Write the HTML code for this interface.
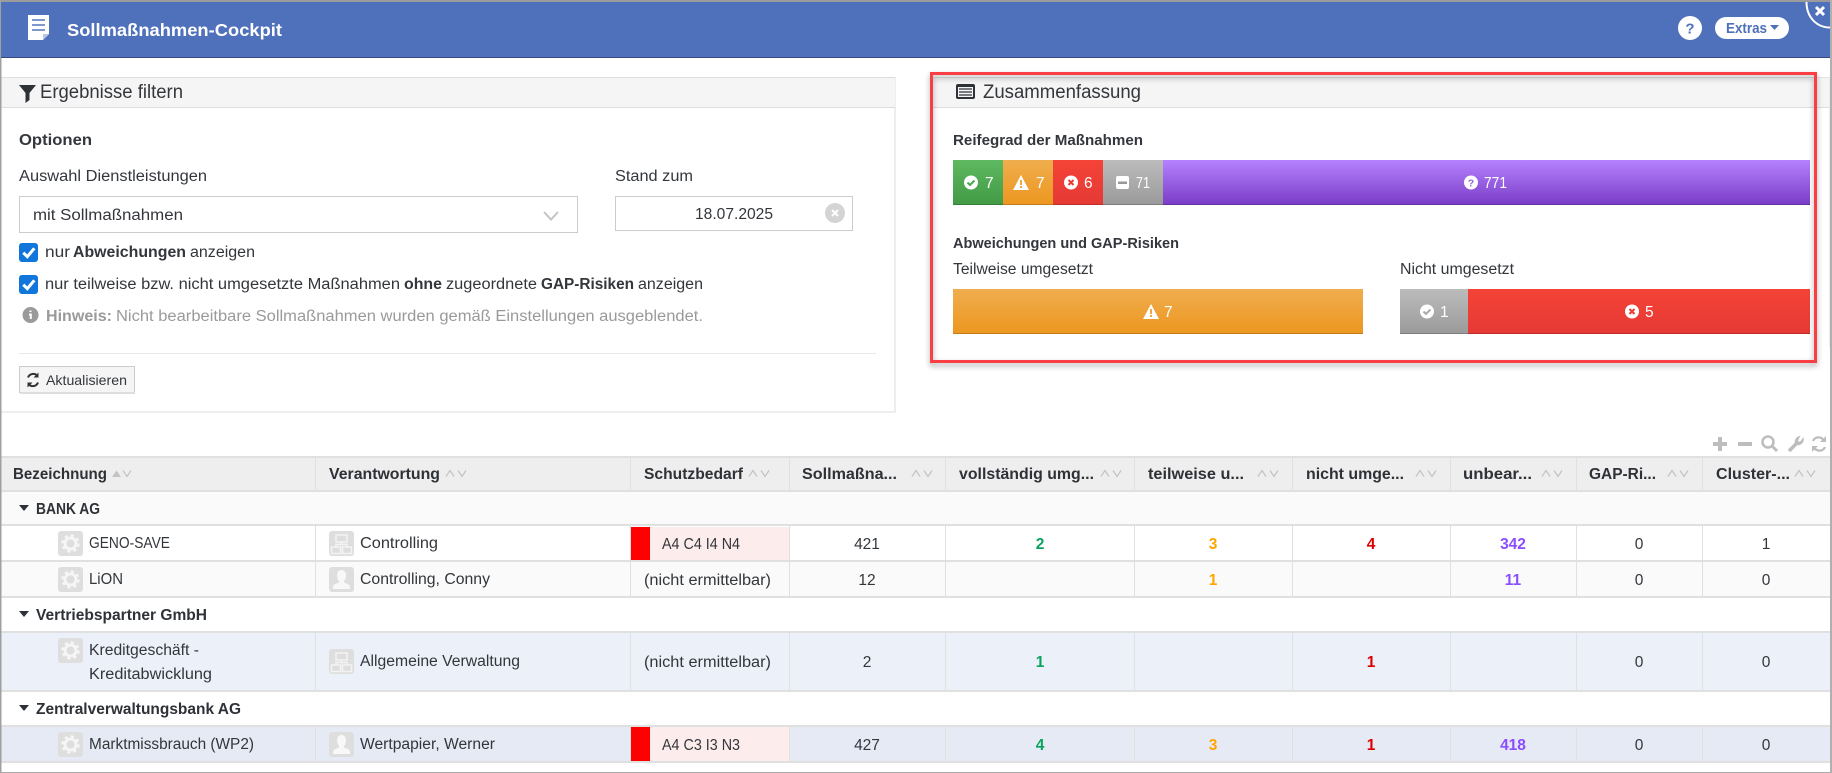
<!DOCTYPE html>
<html lang="de"><head><meta charset="utf-8"><title>Sollmaßnahmen-Cockpit</title>
<style>
html,body{margin:0;padding:0;background:#fff;width:1832px;height:773px;overflow:hidden}
svg{display:block}
text{font-family:"Liberation Sans",sans-serif;font-size:15.5px;fill:#33363b}
.b{font-weight:700}
.h{font-weight:700;fill:#2e3136}
.w{fill:#fff}
.c{text-anchor:middle}
.g{fill:#9a9a9a}
.n{font-weight:700;text-anchor:middle}
</style></head><body>
<svg width="1832" height="773" viewBox="0 0 1832 773" xmlns="http://www.w3.org/2000/svg">
<defs>
<linearGradient id="gg" x1="0" y1="0" x2="0" y2="1"><stop offset="0" stop-color="#5fb960"/><stop offset="1" stop-color="#429a45"/></linearGradient>
<linearGradient id="go" x1="0" y1="0" x2="0" y2="1"><stop offset="0" stop-color="#f0ad4e"/><stop offset="1" stop-color="#ec971f"/></linearGradient>
<linearGradient id="gr" x1="0" y1="0" x2="0" y2="1"><stop offset="0" stop-color="#f54337"/><stop offset="1" stop-color="#e53935"/></linearGradient>
<linearGradient id="ga" x1="0" y1="0" x2="0" y2="1"><stop offset="0" stop-color="#bcbcbc"/><stop offset="1" stop-color="#9a9a9a"/></linearGradient>
<linearGradient id="gp" x1="0" y1="0" x2="0" y2="1"><stop offset="0" stop-color="#b482ff"/><stop offset="1" stop-color="#7a3cc6"/></linearGradient>
<symbol id="gear" viewBox="0 0 25 25" overflow="visible"><rect width="25" height="25" rx="3" fill="#dedede"/><circle cx="12.5" cy="12.5" r="5.500" fill="none" stroke="#f6f6f6" stroke-width="2.800"/><circle cx="12.5" cy="12.5" r="8" fill="none" stroke="#f6f6f6" stroke-width="2.400" stroke-dasharray="3.200 3.080"/></symbol>
<symbol id="org" viewBox="0 0 25 25" overflow="visible"><rect width="25" height="25" rx="3" fill="#dedede"/><g fill="none" stroke="#f3f3f3" stroke-width="1.500"><rect x="7" y="4" width="11" height="7"/><rect x="2.500" y="16" width="9" height="6.500"/><rect x="13.500" y="16" width="9" height="6.500"/><path d="M12.500 11v2.500M7 16v-2.500h11V16"/></g></symbol>
<symbol id="usr" viewBox="0 0 25 25" overflow="visible"><rect width="25" height="25" rx="3" fill="#dedede"/><path d="M12.500 3c3 0 4.500 2.500 4.500 5.500 0 2.500-1 4.500-2 5.500v1.500c2 1 6 1.500 6 4.500v2H4v-2c0-3 4-3.500 6-4.500V14c-1-1-2-3-2-5.500C8 5.500 9.500 3 12.500 3z" fill="#f8f8f8"/></symbol>
</defs>

<!-- frame -->
<rect x="0" y="0" width="1832" height="2" fill="#9b9b9b"/>
<rect x="0" y="0" width="1.500" height="773" fill="#a0a0a0"/>
<rect x="0" y="772" width="1832" height="1" fill="#aaa"/>
<rect x="1830" y="0" width="2" height="773" fill="#b0b0b0"/>

<!-- title bar -->
<rect x="1" y="2" width="1829" height="56" fill="#4f70ba"/>
<rect x="1" y="57" width="1829" height="1" fill="#33497f"/>
<path d="M28 15h21v19l-6 6H28z" fill="#fff"/>
<path d="M43 40v-6h6z" fill="#b9c7e6"/>
<path d="M32 20h13M32 25h13M32 30h13" stroke="#7f97cf" stroke-width="2"/>
<text x="67" y="36" class="b w" style="font-size:17.500px" textLength="215" lengthAdjust="spacingAndGlyphs">Sollmaßnahmen-Cockpit</text>
<circle cx="1690" cy="28" r="12" fill="#fff"/>
<text x="1690" y="33.500" class="b c" style="font-size:15px;fill:#4f70ba">?</text>
<rect x="1715" y="17" width="74" height="22" rx="11" fill="#fff"/>
<text x="1726" y="33" class="b" style="font-size:15px;fill:#4f70ba" textLength="41" lengthAdjust="spacingAndGlyphs">Extras</text>
<path d="M1770 25h9l-4.500 5z" fill="#4f70ba"/>
<path d="M1806.500 2c0 15 10 25.500 23.500 25.500" fill="none" stroke="#fff" stroke-width="2"/>
<path d="M1816 7l8 8M1824 7l-8 8" stroke="#fff" stroke-width="3"/>

<!-- left panel -->
<rect x="0.500" y="77.500" width="894.500" height="334.500" fill="#fff" stroke="#ddd"/>
<rect x="1" y="78" width="894" height="29" fill="#f5f5f5"/>
<rect x="1" y="107" width="894" height="1" fill="#ddd"/>
<rect x="0" y="77" width="1.500" height="336" fill="#a0a0a0"/>
<path d="M19 85h17l-6.500 8v7l-4 3V93z" fill="#2e3136"/>
<text x="40" y="98" style="font-size:19px" textLength="143" lengthAdjust="spacingAndGlyphs">Ergebnisse filtern</text>
<text x="19" y="145" class="b" textLength="73" lengthAdjust="spacingAndGlyphs">Optionen</text>
<text x="19" y="181" textLength="188" lengthAdjust="spacingAndGlyphs">Auswahl Dienstleistungen</text>
<text x="615" y="181" textLength="78" lengthAdjust="spacingAndGlyphs">Stand zum</text>
<rect x="19.500" y="196.500" width="558" height="36" fill="#fff" stroke="#ccc"/>
<text x="33" y="220" textLength="150" lengthAdjust="spacingAndGlyphs">mit Sollmaßnahmen</text>
<path d="M544 212l7 7.500 7-7.500" fill="none" stroke="#c4c4c4" stroke-width="2"/>
<rect x="615.500" y="196.500" width="237" height="34" fill="#fff" stroke="#ccc"/>
<text x="695" y="219" textLength="78" lengthAdjust="spacingAndGlyphs">18.07.2025</text>
<circle cx="835" cy="213" r="10" fill="#d4d4d4"/>
<path d="M832 210l6 6M838 210l-6 6" stroke="#fff" stroke-width="2"/>
<rect x="19" y="243" width="19" height="19" rx="3" fill="#1176dc"/>
<path d="M23.300 252.700l4 4 7-8.400" fill="none" stroke="#fff" stroke-width="3"/>
<text x="45" y="257" textLength="25" lengthAdjust="spacingAndGlyphs">nur</text>
<text x="73" y="257" class="b" textLength="113" lengthAdjust="spacingAndGlyphs">Abweichungen</text>
<text x="190" y="257" textLength="65" lengthAdjust="spacingAndGlyphs">anzeigen</text>
<rect x="19" y="275" width="19" height="19" rx="3" fill="#1176dc"/>
<path d="M23.300 284.700l4 4 7-8.400" fill="none" stroke="#fff" stroke-width="3"/>
<text x="45" y="289" textLength="355" lengthAdjust="spacingAndGlyphs">nur teilweise bzw. nicht umgesetzte Maßnahmen</text>
<text x="404" y="289" class="b" textLength="38" lengthAdjust="spacingAndGlyphs">ohne</text>
<text x="446" y="289" textLength="91" lengthAdjust="spacingAndGlyphs">zugeordnete</text>
<text x="541" y="289" class="b" textLength="93" lengthAdjust="spacingAndGlyphs">GAP-Risiken</text>
<text x="638" y="289" textLength="65" lengthAdjust="spacingAndGlyphs">anzeigen</text>
<circle cx="30.500" cy="315" r="8" fill="#9a9a9a"/>
<path d="M30.500 310.500v1.500M29 314.500H30.800V319" fill="none" stroke="#fff" stroke-width="2"/>
<text x="46" y="321" class="b g" textLength="66" lengthAdjust="spacingAndGlyphs">Hinweis:</text>
<text x="116" y="321" class="g" textLength="587" lengthAdjust="spacingAndGlyphs">Nicht bearbeitbare Sollmaßnahmen wurden gemäß Einstellungen ausgeblendet.</text>
<rect x="19" y="353" width="857" height="1" fill="#e8e8e8"/>
<rect x="19.500" y="366.500" width="115" height="26" fill="#f5f5f5" stroke="#ccc"/>
<rect x="20" y="392" width="115" height="2" fill="#ddd"/>
<path d="M37.500 376a5.500 5.500 0 0 0-9.500 1.500M28.500 384a5.500 5.500 0 0 0 9.500-1.500" fill="none" stroke="#333" stroke-width="2"/>
<path d="M38.500 372.500v5h-5zM27.500 387.500v-5h5z" fill="#333"/>
<text x="46" y="385" style="font-size:14px" textLength="81" lengthAdjust="spacingAndGlyphs">Aktualisieren</text>

<!-- right panel -->
<rect x="933" y="78" width="896" height="29" fill="#f5f5f5"/>
<rect x="933" y="77" width="896" height="1" fill="#e4e4e4"/>
<rect x="933" y="107" width="896" height="1" fill="#ddd"/>
<rect x="1829" y="77" width="1" height="270" fill="#ebebeb"/>
<rect x="956" y="84" width="19" height="15" rx="2" fill="#2e3136"/>
<rect x="958" y="87" width="15" height="10" fill="#f5f5f5"/>
<path d="M959 89h13M959 92h13M959 95h13" stroke="#2e3136" stroke-width="1.300"/>
<text x="983" y="98" style="font-size:19px" textLength="158" lengthAdjust="spacingAndGlyphs">Zusammenfassung</text>
<text x="953" y="145" class="b" textLength="190" lengthAdjust="spacingAndGlyphs" style="font-size:15px">Reifegrad der Maßnahmen</text>

<!-- bar 1 -->
<rect x="953" y="160" width="50" height="45" fill="url(#gg)"/>
<rect x="1003" y="160" width="50" height="45" fill="url(#go)"/>
<rect x="1053" y="160" width="50" height="45" fill="url(#gr)"/>
<rect x="1103" y="160" width="60" height="45" fill="url(#ga)"/>
<rect x="1163" y="160" width="647" height="45" fill="url(#gp)"/>
<rect x="953" y="204" width="857" height="1" fill="#000" fill-opacity=".18"/>
<circle cx="971" cy="182.500" r="7" fill="#fff"/><path d="M967.500 182.500l2.500 2.500 4.500-4.500" fill="none" stroke="#4aa74c" stroke-width="2"/>
<text x="985" y="188" class="w">7</text>
<path d="M1021 175l8 15h-16z" fill="#fff"/><path d="M1021 180v5M1021 186v2" stroke="#ee9f2c" stroke-width="1.800"/>
<text x="1036" y="188" class="w">7</text>
<circle cx="1071" cy="182.500" r="7" fill="#fff"/><path d="M1068.500 180l5 5M1073.500 180l-5 5" stroke="#ec3b35" stroke-width="2"/>
<text x="1084" y="188" class="w">6</text>
<rect x="1116" y="176" width="13" height="13" rx="2" fill="#fff"/><rect x="1118" y="181.500" width="9" height="2.500" fill="#999"/>
<text x="1136" y="188" class="w" textLength="14" lengthAdjust="spacingAndGlyphs">71</text>
<circle cx="1471" cy="182.500" r="7" fill="#fff"/><text x="1471" y="186.500" class="b c" style="font-size:10.500px;fill:#9a60e2">?</text>
<text x="1484" y="188" class="w" textLength="23" lengthAdjust="spacingAndGlyphs">771</text>

<text x="953" y="248" class="b" textLength="226" lengthAdjust="spacingAndGlyphs" style="font-size:15px">Abweichungen und GAP-Risiken</text>
<text x="953" y="274" textLength="140" lengthAdjust="spacingAndGlyphs">Teilweise umgesetzt</text>
<text x="1400" y="274" textLength="114" lengthAdjust="spacingAndGlyphs">Nicht umgesetzt</text>

<!-- bar 2 -->
<rect x="953" y="289" width="410" height="45" fill="url(#go)"/>
<rect x="1400" y="289" width="68" height="45" fill="url(#ga)"/>
<rect x="1468" y="289" width="342" height="45" fill="url(#gr)"/>
<rect x="953" y="333" width="410" height="1" fill="#000" fill-opacity=".18"/>
<rect x="1400" y="333" width="410" height="1" fill="#000" fill-opacity=".18"/>
<path d="M1151 304l8 15h-16z" fill="#fff"/><path d="M1151 309v5M1151 315v2" stroke="#ee9f2c" stroke-width="1.800"/>
<text x="1164" y="317" class="w">7</text>
<circle cx="1427" cy="311.500" r="7" fill="#fff"/><path d="M1423.500 311.500l2.500 2.500 4.500-4.500" fill="none" stroke="#aaa" stroke-width="2"/>
<text x="1440" y="317" class="w">1</text>
<circle cx="1632" cy="311.500" r="7" fill="#fff"/><path d="M1629.500 309l5 5M1634.500 309l-5 5" stroke="#ec3b35" stroke-width="2"/>
<text x="1645" y="317" class="w">5</text>

<!-- annotation -->
<rect x="931.500" y="73.500" width="884" height="288" fill="none" stroke="#fb3d44" stroke-width="3" style="filter:drop-shadow(0 3px 3px rgba(0,0,0,.35))"/>

<!-- toolbar -->
<g fill="none" stroke="#bdbdbd" stroke-width="4">
<path d="M1720 437v14M1713 444h14M1738 444h14"/>
<circle cx="1768" cy="442" r="5.500" stroke-width="2.500"/>
<path d="M1772 446l5 5" stroke-width="3"/>
<path d="M1789 451l8-8" stroke-width="3.500"/>
<path d="M1796 444a5 5 0 0 1 3-7l-2 4 3 2 3-4a5 5 0 0 1-7 5z" stroke-width="1.500" fill="#bdbdbd"/>
<path d="M1824 441a6 6 0 0 0-11 0M1814 447a6 6 0 0 0 11 0" stroke-width="2.200"/>
</g>
<path d="M1826 436v6h-6zM1812 452v-6h6z" fill="#bdbdbd"/>

<!-- table backgrounds -->
<rect x="1.500" y="457" width="1828.500" height="34" fill="#eee"/>
<rect x="1.500" y="491" width="1828.500" height="34" fill="#fafafa"/>
<rect x="1.500" y="561" width="1828.500" height="36" fill="#fafafa"/>
<rect x="1.500" y="632" width="1828.500" height="59" fill="#ecf0f9"/>
<rect x="1.500" y="726" width="1828.500" height="36" fill="#e6eaf5"/>
<rect x="630" y="527" width="159" height="34" fill="#fdecec"/>
<rect x="630" y="527" width="20" height="34" fill="#f00"/>
<rect x="630" y="727" width="159" height="34" fill="#fdecec"/>
<rect x="630" y="727" width="20" height="34" fill="#f00"/>
<!-- horizontal lines -->
<g fill="#e0e0e0">
<rect x="1.500" y="456" width="1828.500" height="2"/><rect x="1.500" y="490" width="1828.500" height="2"/>
<rect x="1.500" y="524" width="1828.500" height="2"/><rect x="1.500" y="560" width="1828.500" height="2"/>
<rect x="1.500" y="596" width="1828.500" height="2"/><rect x="1.500" y="631" width="1828.500" height="2"/>
<rect x="1.500" y="690" width="1828.500" height="2"/><rect x="1.500" y="725" width="1828.500" height="2"/>
<rect x="1.500" y="761" width="1828.500" height="2"/>
</g>
<!-- vertical lines -->
<path d="M315.500 458V490M630.500 458V490M789.500 458V490M945.500 458V490M1134.500 458V490M1292.500 458V490M1450.500 458V490M1576.500 458V490M1702.500 458V490
M315.500 526V596M630.500 526V596M789.500 526V596M945.500 526V596M1134.500 526V596M1292.500 526V596M1450.500 526V596M1576.500 526V596M1702.500 526V596
M315.500 633V690M630.500 633V690M789.500 633V690M945.500 633V690M1134.500 633V690M1292.500 633V690M1450.500 633V690M1576.500 633V690M1702.500 633V690
M315.500 727V761M630.500 727V761M789.500 727V761M945.500 727V761M1134.500 727V761M1292.500 727V761M1450.500 727V761M1576.500 727V761M1702.500 727V761" stroke="#e0e0e0" fill="none"/>

<!-- table head -->
<text x="13" y="479" class="h" textLength="94" lengthAdjust="spacingAndGlyphs">Bezeichnung</text>
<text x="329" y="479" class="h" textLength="111" lengthAdjust="spacingAndGlyphs">Verantwortung</text>
<text x="644" y="479" class="h" textLength="99" lengthAdjust="spacingAndGlyphs">Schutzbedarf</text>
<text x="802" y="479" class="h" textLength="95" lengthAdjust="spacingAndGlyphs">Sollmaßna...</text>
<text x="959" y="479" class="h" textLength="135" lengthAdjust="spacingAndGlyphs">vollständig umg...</text>
<text x="1148" y="479" class="h" textLength="96" lengthAdjust="spacingAndGlyphs">teilweise u...</text>
<text x="1306" y="479" class="h" textLength="98" lengthAdjust="spacingAndGlyphs">nicht umge...</text>
<text x="1463" y="479" class="h" textLength="69" lengthAdjust="spacingAndGlyphs">unbear...</text>
<text x="1589" y="479" class="h" textLength="67" lengthAdjust="spacingAndGlyphs">GAP-Ri...</text>
<text x="1716" y="479" class="h" textLength="74" lengthAdjust="spacingAndGlyphs">Cluster-...</text>
<!-- sort arrows -->
<path d="M112 477l4.500-6.500 4.500 6.500z" fill="#c4c4c4"/>
<path d="M123 470.500l4 6 4-6M446 476.500l4-6 4 6M458 470.500l4 6 4-6M749 476.500l4-6 4 6M761 470.500l4 6 4-6M912 476.500l4-6 4 6M924 470.500l4 6 4-6M1101 476.500l4-6 4 6M1113 470.500l4 6 4-6M1258 476.500l4-6 4 6M1270 470.500l4 6 4-6M1416 476.500l4-6 4 6M1428 470.500l4 6 4-6M1542 476.500l4-6 4 6M1554 470.500l4 6 4-6M1668 476.500l4-6 4 6M1680 470.500l4 6 4-6M1795 476.500l4-6 4 6M1807 470.500l4 6 4-6" fill="none" stroke="#c4c4c4" stroke-width="1.300"/>

<!-- groups -->
<path d="M19 505h10l-5 6zM19 611h10l-5 6zM19 705h10l-5 6z" fill="#2e3136"/>
<text x="36" y="514" class="h" textLength="64" lengthAdjust="spacingAndGlyphs">BANK AG</text>
<text x="36" y="620" class="h" textLength="171" lengthAdjust="spacingAndGlyphs">Vertriebspartner GmbH</text>
<text x="36" y="714" class="h" textLength="205" lengthAdjust="spacingAndGlyphs">Zentralverwaltungsbank AG</text>

<!-- row icons -->
<use href="#gear" x="58" y="531" width="25" height="25"/>
<use href="#gear" x="58" y="567" width="25" height="25"/>
<use href="#gear" x="58" y="638" width="25" height="25"/>
<use href="#gear" x="58" y="732" width="25" height="25"/>
<use href="#org" x="329" y="531" width="25" height="25"/>
<use href="#usr" x="329" y="567" width="25" height="25"/>
<use href="#org" x="329" y="649" width="25" height="25"/>
<use href="#usr" x="329" y="732" width="25" height="25"/>

<!-- rows -->
<text x="89" y="548" textLength="81" lengthAdjust="spacingAndGlyphs">GENO-SAVE</text>
<text x="360" y="548" textLength="78" lengthAdjust="spacingAndGlyphs">Controlling</text>
<text x="662" y="549" textLength="78" lengthAdjust="spacingAndGlyphs">A4 C4 I4 N4</text>
<text x="867" y="549" class="c">421</text>
<text x="1040" y="549" class="n" style="fill:#0aa35e">2</text>
<text x="1213" y="549" class="n" style="fill:#ffa500">3</text>
<text x="1371" y="549" class="n" style="fill:#dd0000">4</text>
<text x="1513" y="549" class="n" style="fill:#8a4dff">342</text>
<text x="1639" y="549" class="c">0</text>
<text x="1766" y="549" class="c">1</text>

<text x="89" y="584" textLength="34" lengthAdjust="spacingAndGlyphs">LiON</text>
<text x="360" y="584" textLength="130" lengthAdjust="spacingAndGlyphs">Controlling, Conny</text>
<text x="644" y="585" textLength="127" lengthAdjust="spacingAndGlyphs">(nicht ermittelbar)</text>
<text x="867" y="585" class="c">12</text>
<text x="1213" y="585" class="n" style="fill:#ffa500">1</text>
<text x="1513" y="585" class="n" style="fill:#8a4dff">11</text>
<text x="1639" y="585" class="c">0</text>
<text x="1766" y="585" class="c">0</text>

<text x="89" y="655" textLength="110" lengthAdjust="spacingAndGlyphs">Kreditgeschäft -</text>
<text x="89" y="679" textLength="123" lengthAdjust="spacingAndGlyphs">Kreditabwicklung</text>
<text x="360" y="666" textLength="160" lengthAdjust="spacingAndGlyphs">Allgemeine Verwaltung</text>
<text x="644" y="667" textLength="127" lengthAdjust="spacingAndGlyphs">(nicht ermittelbar)</text>
<text x="867" y="667" class="c">2</text>
<text x="1040" y="667" class="n" style="fill:#0aa35e">1</text>
<text x="1371" y="667" class="n" style="fill:#dd0000">1</text>
<text x="1639" y="667" class="c">0</text>
<text x="1766" y="667" class="c">0</text>

<text x="89" y="749" textLength="165" lengthAdjust="spacingAndGlyphs">Marktmissbrauch (WP2)</text>
<text x="360" y="749" textLength="135" lengthAdjust="spacingAndGlyphs">Wertpapier, Werner</text>
<text x="662" y="750" textLength="78" lengthAdjust="spacingAndGlyphs">A4 C3 I3 N3</text>
<text x="867" y="750" class="c">427</text>
<text x="1040" y="750" class="n" style="fill:#0aa35e">4</text>
<text x="1213" y="750" class="n" style="fill:#ffa500">3</text>
<text x="1371" y="750" class="n" style="fill:#dd0000">1</text>
<text x="1513" y="750" class="n" style="fill:#8a4dff">418</text>
<text x="1639" y="750" class="c">0</text>
<text x="1766" y="750" class="c">0</text>
</svg>
</body></html>
